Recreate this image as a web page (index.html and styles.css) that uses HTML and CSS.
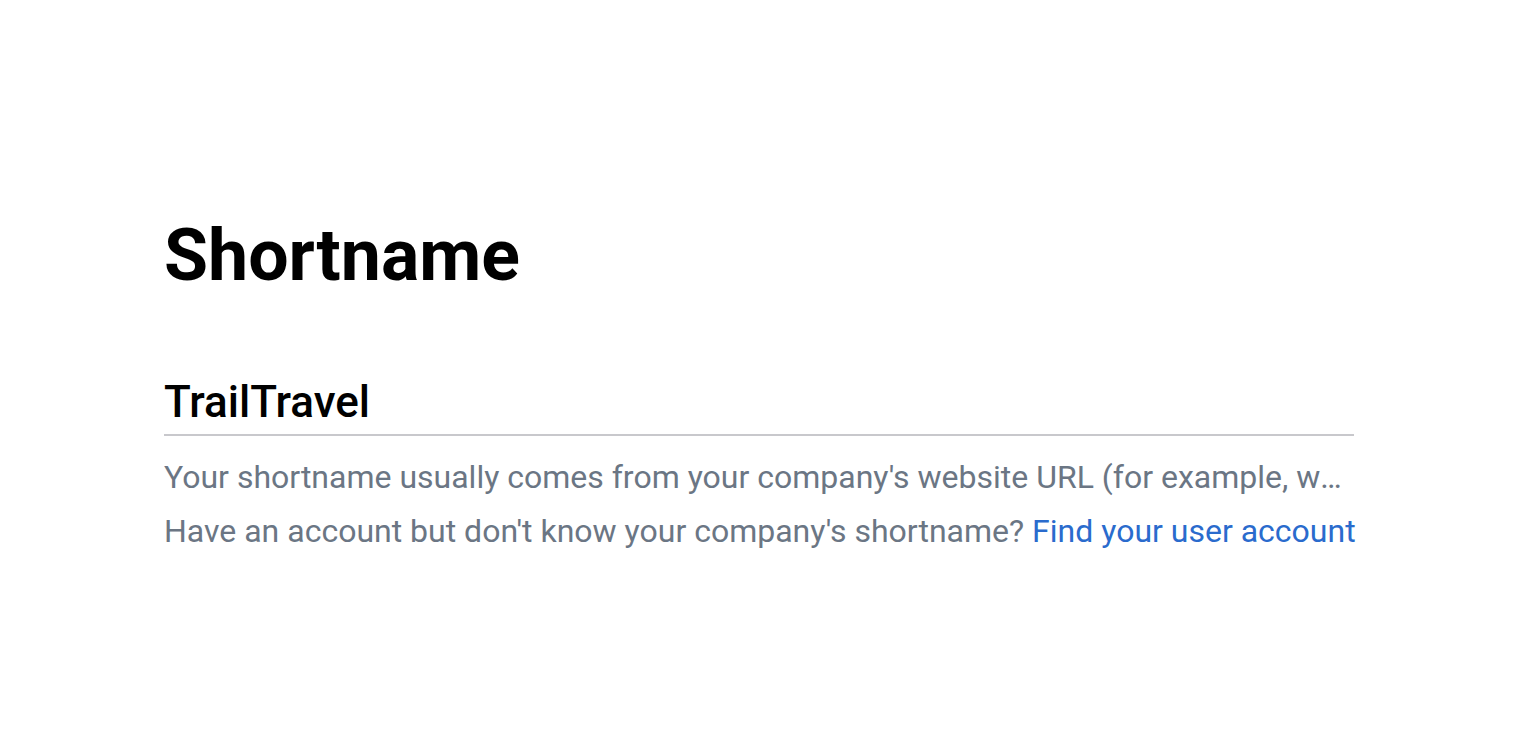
FILE: index.html
```html
<!DOCTYPE html>
<html>
<head>
<meta charset="utf-8">
<link rel="stylesheet" href="styles.css">
</head>
<body>
<main class="page">
  <h1 class="title">Shortname</h1>
  <div class="field">
    <div class="value">TrailTravel</div>
  </div>
  <p class="hint hint-first">Your shortname usually comes from your company's website URL (for example, www.trailtravel.com would have the shortname trailtravel).</p>
  <p class="hint hint-second">Have an account but don't know your company's shortname? <a class="link" href="#">Find your user account</a></p>
</main>
</body>
</html>
```
FILE: styles.css
```css
html, body {
  margin: 0;
  padding: 0;
  background: #ffffff;
}
body {
  font-family: Roboto, "Liberation Sans", sans-serif;
}
.page {
  width: 1190px;
  padding: 208px 0 0 164px;
}
.title {
  margin: 0;
  font-size: 71.6px;
  font-weight: 700;
  line-height: 96px;
  color: #000;
}
.field {
  margin-top: 74px;
  border-bottom: 2px solid #c8c8cc;
  padding-bottom: 8px;
}
.value {
  font-size: 44px;
  font-weight: 500;
  line-height: 48px;
  color: #000;
}
.hint {
  margin: 0;
  font-size: 32px;
  line-height: 54px;
  color: #6b7684;
  white-space: nowrap;
}
.hint-first {
  margin-top: 14px;
  width: 1184px;
  overflow: hidden;
  text-overflow: ellipsis;
}
.link {
  color: #2a6bcd;
  text-decoration: none;
}
```
